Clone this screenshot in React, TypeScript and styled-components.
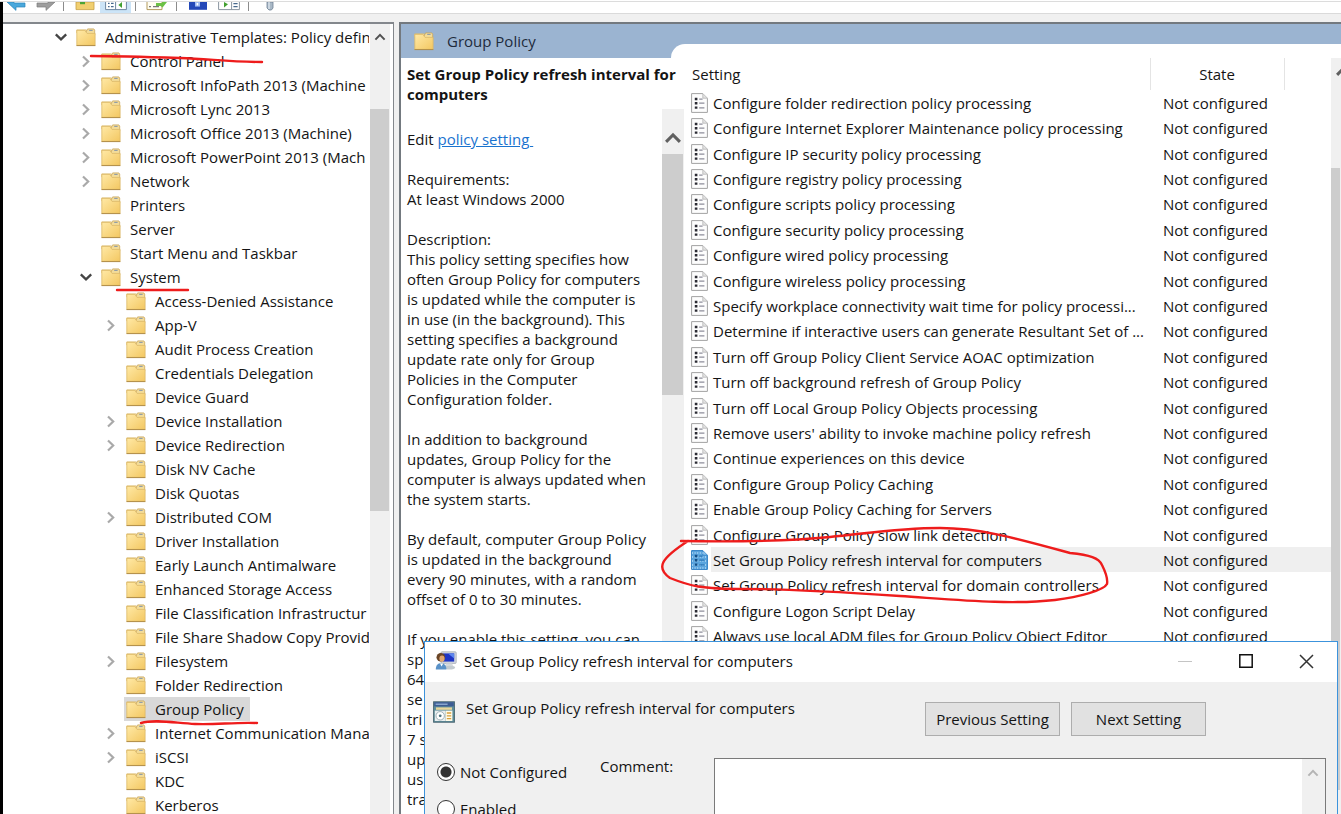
import React from "react";
import styled, { createGlobalStyle } from "styled-components";

const GlobalStyle = createGlobalStyle`
  * { box-sizing: border-box; }
  body { margin: 0; background: #fff; }
  body, button, input, textarea {
    font-family: "Open Sans", "Noto Sans", sans-serif;
    font-size: 15px;
    color: #141414;
  }
  svg { flex: none; }
`;

const Screen = styled.div`
  position: relative;
  display: flex;
  flex-direction: column;
  height: 100vh;
  overflow: hidden;
`;

const TopEdge = styled.div`
  flex: none;
  height: 2px;
  border-bottom: 1px solid #dcdcdc;
`;

const Shell = styled.div`
  flex: 1;
  min-height: 0;
  display: flex;
  flex-direction: column;
  border-left: 3px solid #000;
  background: #f0f0f0;
`;

/* Toolbar */

const Toolbar = styled.div`
  flex: none;
  display: flex;
  height: 12px;
  background: #fff;
  border-bottom: 1px solid #dadada;
`;

const ToolButton = styled.button<{ $nav?: boolean; $active?: boolean }>`
  display: flex;
  justify-content: center;
  align-items: flex-start;
  width: ${(p) => (p.$nav ? "28px" : "31px")};
  height: 11px;
  padding: 0;
  border: 0;
  background: ${(p) => (p.$active ? "#cce4f7" : "transparent")};
`;

const ToolDivider = styled.span`
  width: 1px;
  height: 9px;
  margin: 0 5px 0 4px;
  background: #8c8c8c;
`;

/* Panels */

const Main = styled.main`
  flex: 1;
  min-height: 0;
  display: flex;
  gap: 5px;
  padding-top: 8px;
`;

const TreePanel = styled.nav`
  flex: 0 0 391px;
  min-width: 0;
  display: flex;
  padding-right: 3px;
  background: #fff;
  border-top: 2px solid #83878c;
  border-right: 1px solid #83878c;
`;

const Tree = styled.ul`
  flex: 1;
  min-width: 0;
  margin: 0 1px 0 0;
  padding: 1px 0 0;
  overflow: hidden;
  list-style: none;
`;

const TreeItem = styled.li<{ $level: number }>`
  display: flex;
  align-items: center;
  height: 24px;
  padding-left: ${(p) => 50 + p.$level * 25}px;
  white-space: nowrap;
`;

const ChevronSlot = styled.span`
  flex: none;
  display: flex;
  justify-content: center;
  width: 16px;
  margin-right: 5px;
`;

const TreeLabel = styled.span<{ $selected?: boolean }>`
  display: flex;
  align-items: center;
  gap: 9px;
  height: 24px;
  padding: 0 6px 0 2px;
  background: ${(p) => (p.$selected ? "#d9d9d9" : "transparent")};
`;

const Track = styled.div<{ $width: number }>`
  flex: 0 0 ${(p) => p.$width}px;
  display: flex;
  flex-direction: column;
  overflow: hidden;
  background: #f0f0f0;
`;

const TrackHead = styled.div<{ $height: number; $top: number; $left: number }>`
  flex: none;
  height: ${(p) => p.$height}px;
  padding: ${(p) => p.$top}px 0 0 ${(p) => p.$left}px;
  line-height: 0;
`;

const Thumb = styled.div<{ $height: number }>`
  flex: none;
  height: ${(p) => p.$height}px;
  margin-right: 1px;
  background: #cdcdcd;
`;

const DetailPanel = styled.section`
  flex: 1;
  min-width: 0;
  display: flex;
  flex-direction: column;
  background: #fff;
  border-top: 2px solid #73797f;
  border-left: 2px solid #73797f;
`;

const DetailHeader = styled.header`
  flex: none;
  display: flex;
  align-items: flex-end;
  height: 34px;
  background: #9bb4d1;
`;

const DetailTitle = styled.div`
  flex: 0 0 270px;
  display: flex;
  align-items: center;
  gap: 13px;
  height: 34px;
  padding-left: 13px;
  color: #1e2b3c;
`;

const Notch = styled.div`
  flex: 1;
  height: 14px;
  background: #fff;
  border-top-left-radius: 14px;
`;

const DetailBody = styled.div`
  flex: 1;
  min-height: 0;
  display: flex;
`;

const Description = styled.article`
  flex: 0 0 283px;
  display: flex;
  flex-direction: column;
  line-height: 20px;
  white-space: pre;
`;

const DescriptionTitle = styled.h1`
  margin: 0;
  padding: 6px 0 5px 6px;
  font-size: 15px;
  line-height: 20px;
`;

const DescriptionScroll = styled.div`
  flex: 1;
  min-height: 0;
  display: flex;
`;

const DescriptionText = styled.div`
  flex: 1;
  min-width: 0;
  padding: 20px 0 0 6px;
  overflow: hidden;
`;

const Paragraph = styled.p`
  margin: 0 0 20px;
`;

const PolicyLink = styled.a`
  color: #1a73cf;
  text-decoration: underline;
`;

/* Settings table */

const List = styled.div`
  flex: 1;
  min-width: 0;
  overflow: hidden;
`;

const SettingsTable = styled.table`
  width: 100%;
  table-layout: fixed;
  border-collapse: collapse;
  white-space: nowrap;
`;

const HeadCell = styled.th<{ $width?: number; $center?: boolean; $divided?: boolean }>`
  width: ${(p) => (p.$width ? p.$width + "px" : "auto")};
  height: 32px;
  padding: 0 8px;
  font-weight: 400;
  text-align: ${(p) => (p.$center ? "center" : "left")};
  border-right: ${(p) => (p.$divided ? "1px solid #e4e4e4" : "0")};
`;

const SettingRow = styled.tr<{ $selected?: boolean }>`
  height: 25px;
  line-height: 20px;
  background: ${(p) =>
    p.$selected ? "linear-gradient(90deg, #fff 27px, #efefef 27px)" : "transparent"};
  &:nth-child(5n + 2), &:nth-child(5n) { height: 26px; }
`;

const NameCell = styled.td`
  padding: 0 0 0 7px;
  overflow: hidden;
`;

const NameInner = styled.span`
  display: flex;
  align-items: center;
  gap: 5px;
`;

const StateCell = styled.td`
  padding: 0 0 0 13px;
`;

/* Policy dialog */

const Dialog = styled.section`
  position: absolute;
  top: 641px;
  right: 3px;
  bottom: 0;
  left: 424px;
  display: flex;
  flex-direction: column;
  overflow: hidden;
  background: #f0f0f0;
  border: 1px solid #3c93dc;
  border-bottom: 0;
`;

const TitleBar = styled.header`
  flex: none;
  display: flex;
  align-items: center;
  height: 40px;
  padding: 0 0 2px 10px;
  background: #fff;
`;

const TitleText = styled.h2`
  flex: 1;
  margin: 0 0 0 7px;
  font-size: 15px;
  font-weight: 400;
`;

const WindowButton = styled.button`
  display: flex;
  align-items: center;
  justify-content: center;
  width: 61px;
  height: 38px;
  padding: 0;
  border: 0;
  background: #fff;
`;

const SettingBar = styled.div`
  flex: none;
  display: flex;
  align-items: flex-start;
  gap: 11px;
  height: 76px;
  padding: 19px 131px 0 8px;
`;

const SettingName = styled.span`
  flex: 1;
  line-height: 14px;
`;

const PushButton = styled.button`
  width: 135px;
  height: 34px;
  margin-top: 1px;
  padding: 0;
  background: #e1e1e1;
  border: 1px solid #adadad;
`;

const OptionForm = styled.form`
  flex: 1;
  min-height: 0;
  display: flex;
  align-items: flex-start;
  padding: 0 11px 0 12px;
`;

const Radios = styled.div`
  flex: 0 0 163px;
  display: flex;
  flex-direction: column;
  gap: 17px;
  padding-top: 4px;
`;

const RadioLabel = styled.label`
  display: flex;
  align-items: center;
  gap: 5px;
  height: 20px;
`;

const Radio = styled.input`
  appearance: none;
  width: 18px;
  height: 18px;
  margin: 0;
  border: 1px solid #333;
  border-radius: 50%;
  background: #fff;
  &:checked {
    background: radial-gradient(circle, #333 5px, #fff 6px);
  }
`;

const CommentLabel = styled.label`
  flex: 0 0 114px;
  line-height: 16px;
`;

const CommentBox = styled.div`
  flex: 1;
  display: flex;
  height: 90px;
  background: #fff;
  border: 1px solid #7a7a7a;
`;

const CommentArea = styled.textarea`
  flex: 1;
  padding: 4px;
  border: 0;
  resize: none;
  outline: none;
`;

const Annotations = styled.svg`
  position: absolute;
  top: 0;
  left: 0;
  pointer-events: none;
`;

/* Icons */

const FolderIcon = () => (
  <svg width="20" height="19" viewBox="0 0 20 19">
    <defs>
      <linearGradient id="folder" x1="0" y1="0" x2="1" y2="1">
        <stop offset="0" stopColor="#ffe9a6" />
        <stop offset="1" stopColor="#f3c761" />
      </linearGradient>
    </defs>
    <path d="M.8 1.9h9.4v3H.8z" fill="#ffeaae" stroke="#d9b96c" strokeWidth=".8" />
    <path d="M9.6 4.8 11.6.9h6.2l.9 1.2v5h-9z" fill="#f3dc9a" stroke="#c9a65c" strokeWidth=".8" />
    <path d="M13.2 2.4h3.4" stroke="#8c9aa8" strokeWidth="1.1" />
    <path d="M.8 2.4h8l2.2 3h8.1v12H.8z" fill="url(#folder)" stroke="#dcb967" strokeWidth=".8" />
    <path d="M.5 17.6h18.9" stroke="#b08d48" strokeWidth="1" />
  </svg>
);

const ChevronRight = () => (
  <svg width="10" height="14" viewBox="0 0 10 14">
    <path d="M2 2.5 7.2 7.5 2 12.5" fill="none" stroke="#a9a9a9" strokeWidth="2.2" />
  </svg>
);

const ChevronDown = () => (
  <svg width="14" height="10" viewBox="0 0 14 10">
    <path d="M1.8 2.4 7 7.4l5.2-5" fill="none" stroke="#444" strokeWidth="2.3" />
  </svg>
);

const ChevronUp = ({ size, color }: { size: number; color: string }) => (
  <svg width={size} height={size} viewBox="0 0 12 12">
    <path d="M1.4 8.6 6 3.9l4.6 4.7" fill="none" stroke={color} strokeWidth="2" />
  </svg>
);

const PolicyIcon = ({ selected }: { selected?: boolean }) => (
  <svg width="17" height="20" viewBox="0 0 17 20">
    <path d="M.6.6h11.2l4.6 4.6v14.2H.6z" fill={selected ? "#5ba5de" : "#fdfdfd"} stroke={selected ? "#2f7fc4" : "#a3a3a3"} />
    <path d="M11.8.8v4.4h4.4" fill={selected ? "#8cc3ee" : "#e3e3e3"} stroke={selected ? "#2f7fc4" : "#b5b5b5"} strokeWidth=".8" />
    {selected && <path d="M1 3h12M1 7h15M1 11h15M1 15h15M1 18h15" stroke="#b4daf5" strokeDasharray="1 1.6" strokeWidth="1.4" />}
    <path d="M3.8 6h2.6M3.8 10.2h2.6M3.8 14.6h2.6" stroke={selected ? "#124e86" : "#2b2b33"} strokeWidth="2.4" />
    <path d="M8.2 6.2h3.4M8.2 10.2h5.2M8.2 14.8h5.2" stroke={selected ? "#2b74b5" : "#8d8d9a"} strokeWidth="1.2" />
  </svg>
);

const ComputerUserIcon = () => (
  <svg width="22" height="20" viewBox="0 0 22 20">
    <rect x="6" y=".8" width="15.2" height="11.6" rx="1" fill="#d3d8de" stroke="#a5abb3" strokeWidth=".8" />
    <rect x="7.8" y="2.4" width="11.4" height="8.2" fill="#1f35c4" />
    <path d="M13 2.4h6.2v5z" fill="#5c86ee" />
    <path d="M11 12.6h6l2.4 4.6H9z" fill="#d5dadd" />
    <ellipse cx="14.6" cy="16.6" rx="5.6" ry="1.9" fill="#c3cbd0" />
    <circle cx="5.8" cy="6.2" r="4.3" fill="#6a4526" />
    <ellipse cx="7" cy="7.6" rx="2.6" ry="3.2" fill="#dfa671" />
    <path d="M.8 18.6c0-4.6 2.2-6.4 5.2-6.4s5.4 1.8 5.4 6.4z" fill="#5a92c8" />
    <path d="M5 12.4l1.6 3 1.6-2.8z" fill="#fff" />
  </svg>
);

const SettingIcon = () => (
  <svg width="22" height="22" viewBox="0 0 22 22">
    <rect x=".6" y=".8" width="20.8" height="20.4" fill="#5f8f9c" stroke="#4a6672" />
    <rect x="1.2" y="1.2" width="19.6" height="4.2" fill="#3d5c93" />
    <path d="M2.6 3.2h12" stroke="#9cb9dd" strokeWidth="1.2" />
    <rect x="3" y="6.4" width="16" height="2.4" fill="#e8d69a" />
    <rect x="1.8" y="9.6" width="10.4" height="10.4" fill="#e9eef0" />
    <circle cx="7.2" cy="14.8" r="4.2" fill="#fff" stroke="#9eb0b6" />
    <circle cx="7.2" cy="14.8" r="1.4" fill="#4d7580" />
    <rect x="12.4" y="9.6" width="7" height="10.4" fill="#fffbe9" />
    <path d="M13.8 12h4.4M13.8 14.8h4.4M13.8 17.6h4.4" stroke="#d79f3c" strokeWidth="1.3" />
  </svg>
);

const BackArrow = () => (
  <svg width="22" height="9" viewBox="0 0 22 9">
    <path d="M1 0h7v1h11v4h-9v3.4z" fill="#4aa8dc" stroke="#2d84b9" strokeWidth=".7" />
  </svg>
);

const ForwardArrow = () => (
  <svg width="22" height="9" viewBox="0 0 22 9">
    <path d="M21 0h-7v1h-11v4h9v3.4z" fill="#9d9d9d" stroke="#7c7c7c" strokeWidth=".7" />
  </svg>
);

const UpFolder = () => (
  <svg width="20" height="9" viewBox="0 0 20 9">
    <path d="M1 0h18v7.6H1z" fill="#f1cf70" stroke="#c79f45" strokeWidth=".8" />
    <path d="M5 0v2.2h5V0" fill="#4ca335" />
  </svg>
);

const TreeToggle = () => (
  <svg width="22" height="9" viewBox="0 0 22 9">
    <path d="M.6 0v7.6h20.8V0" fill="#fff" stroke="#6f87a0" />
    <path d="M10.6 0v7.6" stroke="#6f87a0" />
    <path d="M3 1.4h1.6M6 1.4h2.6M3 4.6h1.6M6 4.6h2.6" stroke="#47698d" strokeWidth="1.4" />
    <path d="M17 0v6l-3.6-3z" fill="#42a02f" />
  </svg>
);

const ExportList = () => (
  <svg width="22" height="9" viewBox="0 0 22 9">
    <path d="M1 0v7.6h15V0" fill="#fffdf0" stroke="#b39a5c" />
    <path d="M3 4.6h2M7 4.6h6" stroke="#777" strokeWidth="1.2" />
    <path d="M10 1h6V0h5l-4.4 5.6-2-1.6H10z" fill="#6cc146" />
  </svg>
);

const HelpWindow = () => (
  <svg width="18" height="9" viewBox="0 0 18 9">
    <path d="M0 0h18v7.8H0z" fill="#2448b8" />
    <path d="M6 0h5v4.6H6z" fill="#9db8f2" />
    <path d="M8.4 1v2.4" stroke="#fff" strokeWidth="1.6" />
  </svg>
);

const ActionPane = () => (
  <svg width="22" height="9" viewBox="0 0 22 9">
    <path d="M.6 0v7.6h20.8V0" fill="#fff" stroke="#8a95a0" />
    <path d="M13.6 0v7.6" stroke="#8a95a0" />
    <path d="M6 0v5.6l4-3.4z" fill="#42a02f" />
    <path d="M15.4 1.6h4.2M15.4 4.6h4.2" stroke="#47698d" strokeWidth="1.4" />
  </svg>
);

const FilterIcon = () => (
  <svg width="10" height="9" viewBox="0 0 10 9">
    <path d="M2 0v6l2 2h2.4L8 6V0z" fill="#a9b8c6" stroke="#6f8294" strokeWidth=".8" />
    <path d="M4 0v7" stroke="#e4ecf3" strokeWidth="1.2" />
  </svg>
);

/* Data */

type Node = { label: string; level: number; open?: boolean; branch?: boolean; selected?: boolean };

const nodes: Node[] = [
  { label: "Administrative Templates: Policy defini", level: 0, open: true },
  { label: "Control Panel", level: 1, branch: true },
  { label: "Microsoft InfoPath 2013 (Machine", level: 1, branch: true },
  { label: "Microsoft Lync 2013", level: 1, branch: true },
  { label: "Microsoft Office 2013 (Machine)", level: 1, branch: true },
  { label: "Microsoft PowerPoint 2013 (Mach", level: 1, branch: true },
  { label: "Network", level: 1, branch: true },
  { label: "Printers", level: 1 },
  { label: "Server", level: 1 },
  { label: "Start Menu and Taskbar", level: 1 },
  { label: "System", level: 1, open: true },
  { label: "Access-Denied Assistance", level: 2 },
  { label: "App-V", level: 2, branch: true },
  { label: "Audit Process Creation", level: 2 },
  { label: "Credentials Delegation", level: 2 },
  { label: "Device Guard", level: 2 },
  { label: "Device Installation", level: 2, branch: true },
  { label: "Device Redirection", level: 2, branch: true },
  { label: "Disk NV Cache", level: 2 },
  { label: "Disk Quotas", level: 2 },
  { label: "Distributed COM", level: 2, branch: true },
  { label: "Driver Installation", level: 2 },
  { label: "Early Launch Antimalware", level: 2 },
  { label: "Enhanced Storage Access", level: 2 },
  { label: "File Classification Infrastructur", level: 2 },
  { label: "File Share Shadow Copy Provid", level: 2 },
  { label: "Filesystem", level: 2, branch: true },
  { label: "Folder Redirection", level: 2 },
  { label: "Group Policy", level: 2, selected: true },
  { label: "Internet Communication Mana", level: 2, branch: true },
  { label: "iSCSI", level: 2, branch: true },
  { label: "KDC", level: 2 },
  { label: "Kerberos", level: 2 },
];

const settings = [
  "Configure folder redirection policy processing",
  "Configure Internet Explorer Maintenance policy processing",
  "Configure IP security policy processing",
  "Configure registry policy processing",
  "Configure scripts policy processing",
  "Configure security policy processing",
  "Configure wired policy processing",
  "Configure wireless policy processing",
  "Specify workplace connectivity wait time for policy processi...",
  "Determine if interactive users can generate Resultant Set of ...",
  "Turn off Group Policy Client Service AOAC optimization",
  "Turn off background refresh of Group Policy",
  "Turn off Local Group Policy Objects processing",
  "Remove users' ability to invoke machine policy refresh",
  "Continue experiences on this device",
  "Configure Group Policy Caching",
  "Enable Group Policy Caching for Servers",
  "Configure Group Policy slow link detection",
  "Set Group Policy refresh interval for computers",
  "Set Group Policy refresh interval for domain controllers",
  "Configure Logon Script Delay",
  "Always use local ADM files for Group Policy Object Editor",
];

const selectedSetting = "Set Group Policy refresh interval for computers";

const paragraphs = [
  "Requirements:\nAt least Windows 2000",
  "Description:\nThis policy setting specifies how\noften Group Policy for computers\nis updated while the computer is\nin use (in the background). This\nsetting specifies a background\nupdate rate only for Group\nPolicies in the Computer\nConfiguration folder.",
  "In addition to background\nupdates, Group Policy for the\ncomputer is always updated when\nthe system starts.",
  "By default, computer Group Policy\nis updated in the background\nevery 90 minutes, with a random\noffset of 0 to 30 minutes.",
  "If you enable this setting, you can\nsp\n64\nse\ntri\n7 s\nup\nus\ntra",
];

export default function App() {
  return (
    <Screen>
      <GlobalStyle />
      <TopEdge />
      <Shell>
        <Toolbar>
          <ToolButton $nav aria-label="Back"><BackArrow /></ToolButton>
          <ToolButton $nav aria-label="Forward"><ForwardArrow /></ToolButton>
          <ToolDivider />
          <ToolButton aria-label="Up one level"><UpFolder /></ToolButton>
          <ToolButton $active aria-label="Show console tree"><TreeToggle /></ToolButton>
          <ToolDivider />
          <ToolButton aria-label="Export list"><ExportList /></ToolButton>
          <ToolDivider />
          <ToolButton aria-label="Help"><HelpWindow /></ToolButton>
          <ToolButton aria-label="Show action pane"><ActionPane /></ToolButton>
          <ToolDivider />
          <ToolButton aria-label="Filter"><FilterIcon /></ToolButton>
        </Toolbar>
        <Main>
          <TreePanel>
            <Tree>
              {nodes.map((node) => (
                <TreeItem key={node.label} $level={node.level}>
                  <ChevronSlot>
                    {node.open && <ChevronDown />}
                    {node.branch && <ChevronRight />}
                  </ChevronSlot>
                  <TreeLabel $selected={node.selected}>
                    <FolderIcon />
                    {node.label}
                  </TreeLabel>
                </TreeItem>
              ))}
            </Tree>
            <Track $width={20}>
              <TrackHead $height={85} $top={7} $left={4}><ChevronUp size={12} color="#505050" /></TrackHead>
              <Thumb $height={402} />
            </Track>
          </TreePanel>
          <DetailPanel>
            <DetailHeader>
              <DetailTitle><FolderIcon />Group Policy</DetailTitle>
              <Notch />
            </DetailHeader>
            <DetailBody>
              <Description>
                <DescriptionTitle>{"Set Group Policy refresh interval for\ncomputers"}</DescriptionTitle>
                <DescriptionScroll>
                  <DescriptionText>
                    <Paragraph>Edit <PolicyLink href="#policy">{"policy setting "}</PolicyLink></Paragraph>
                    {paragraphs.map((text) => <Paragraph key={text}>{text}</Paragraph>)}
                  </DescriptionText>
                  <Track $width={22}>
                    <TrackHead $height={45} $top={20} $left={2}><ChevronUp size={18} color="#606060" /></TrackHead>
                    <Thumb $height={241} />
                  </Track>
                </DescriptionScroll>
              </Description>
              <List>
                <SettingsTable>
                  <thead>
                    <tr>
                      <HeadCell $divided>Setting</HeadCell>
                      <HeadCell $width={134} $center $divided>State</HeadCell>
                      <HeadCell $width={47} aria-label="Comment" />
                    </tr>
                  </thead>
                  <tbody>
                    {settings.map((name) => (
                      <SettingRow key={name} $selected={name === selectedSetting}>
                        <NameCell>
                          <NameInner><PolicyIcon selected={name === selectedSetting} />{name}</NameInner>
                        </NameCell>
                        <StateCell>Not configured</StateCell>
                        <td />
                      </SettingRow>
                    ))}
                  </tbody>
                </SettingsTable>
              </List>
              <Track $width={10}>
                <TrackHead $height={110} $top={4} $left={4}><ChevronUp size={18} color="#606060" /></TrackHead>
                <Thumb $height={622} />
              </Track>
            </DetailBody>
          </DetailPanel>
        </Main>
      </Shell>

      <Dialog>
        <TitleBar>
          <ComputerUserIcon />
          <TitleText>{selectedSetting}</TitleText>
          <WindowButton aria-label="Minimize">
            <svg width="14" height="14"><path d="M0 7.5h14" stroke="#c4c4c4" /></svg>
          </WindowButton>
          <WindowButton aria-label="Maximize">
            <svg width="14" height="14"><path d="M.8.8h12.4v12.4H.8z" fill="none" stroke="#111" strokeWidth="1.5" /></svg>
          </WindowButton>
          <WindowButton aria-label="Close">
            <svg width="15" height="15"><path d="M1 1l13 13M14 1 1 14" stroke="#333" strokeWidth="1.5" /></svg>
          </WindowButton>
        </TitleBar>
        <SettingBar>
          <SettingIcon />
          <SettingName>{selectedSetting}</SettingName>
          <PushButton>Previous Setting</PushButton>
          <PushButton>Next Setting</PushButton>
        </SettingBar>
        <OptionForm>
          <Radios>
            <RadioLabel><Radio type="radio" name="state" defaultChecked />Not Configured</RadioLabel>
            <RadioLabel><Radio type="radio" name="state" />Enabled</RadioLabel>
          </Radios>
          <CommentLabel htmlFor="comment">Comment:</CommentLabel>
          <CommentBox>
            <CommentArea id="comment" />
            <Track $width={23}>
              <TrackHead $height={30} $top={8} $left={5}><ChevronUp size={12} color="#b4b4b4" /></TrackHead>
            </Track>
          </CommentBox>
        </OptionForm>
      </Dialog>

      <Annotations width="1341" height="814" fill="none" stroke="#ee1c1c" strokeWidth="2.4" strokeLinecap="round" strokeLinejoin="round">
        <path d="M91 56C120 56 150 57 180 58S230 62 262 62" />
        <path d="M117 290H188" />
        <path d="M141 723C155 719 175 723 195 724S235 722 257 723" />
        <path d="M681 541C740 542 790 541 830 537S900 528 940 528S1015 538 1070 553C1090 555 1099 558 1102 565C1106 573 1108 579 1107 584C1104 590 1080 597 1055 600C1010 605 960 600 900 596S790 589 745 589S690 586 670 578C656 568 660 559 688 541" />
      </Annotations>
    </Screen>
  );
}
